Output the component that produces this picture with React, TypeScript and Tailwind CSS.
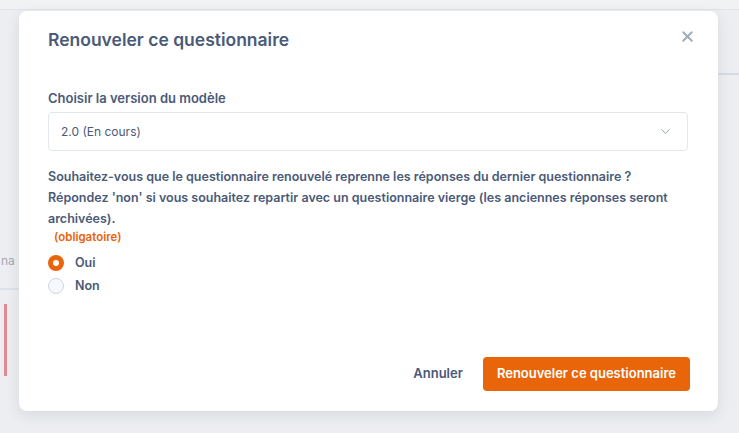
import React from "react"
import { X, ChevronDown } from "lucide-react"

function RenewModal() {
	return (
		<div className="absolute left-[19px] top-[11px] w-[699px] h-[400px] bg-white rounded-[8px] shadow-[0_4px_14px_rgba(60,70,90,0.12)] flex flex-col">
			<div className="flex items-start justify-between pl-[29px] pr-[22px] pt-[17px]">
				<h2 className="text-[17.5px] font-semibold text-[#4a5a78] leading-[24px]">
					Renouveler ce questionnaire
				</h2>
				<button className="text-[#a3abba]">
					<X size={17} strokeWidth={2.8} />
				</button>
			</div>

			<div className="px-[29px] pt-[37px] flex flex-col">
				<label className="text-[13px] font-semibold text-[#4a5a78] leading-[18px]">
					Choisir la version du modèle
				</label>
				<div className="mt-[5px] h-[39px] w-[640px] border border-[#e2e7ef] rounded-[4px] flex items-center justify-between pl-[12px] pr-[14px]">
					<span className="text-[12px] text-[#4a5a78]">2.0 (En cours)</span>
					<ChevronDown size={15} strokeWidth={1.5} className="text-[#8a9ab5]" />
				</div>

				<p className="mt-[15px] text-[12.5px] font-semibold text-[#4a5a78] leading-[21px] w-[640px]">
					Souhaitez-vous que le questionnaire renouvelé reprenne les réponses du dernier questionnaire ?
					<br />
					Répondez 'non' si vous souhaitez repartir avec un questionnaire vierge (les anciennes réponses seront archivées).
				</p>
				<span className="ml-[6px] text-[11.5px] font-semibold text-[#e8650a] leading-[16px]">
					(obligatoire)
				</span>

				<div className="mt-[10px] flex flex-col gap-[7px]">
					<label className="h-[16px] flex items-center gap-[11px]">
						<span className="w-[16px] h-[16px] rounded-full bg-[#e8650a] flex items-center justify-center">
							<span className="w-[6px] h-[6px] rounded-full bg-white" />
						</span>
						<span className="text-[12.5px] font-semibold text-[#4a5a78]">Oui</span>
					</label>
					<label className="h-[16px] flex items-center gap-[11px]">
						<span className="w-[16px] h-[16px] rounded-full border-[1.5px] border-[#cdd5e2] bg-[#f6f8fc]" />
						<span className="text-[12.5px] font-semibold text-[#4a5a78]">Non</span>
					</label>
				</div>
			</div>

			<div className="mt-auto mb-[20px] flex items-center justify-end gap-[20px] pr-[28px]">
				<button className="text-[13px] font-semibold text-[#4a5a78]">Annuler</button>
				<button className="h-[34px] px-[14px] rounded-[4px] bg-[#e8650a] text-white text-[13px] font-semibold">
					Renouveler ce questionnaire
				</button>
			</div>
		</div>
	)
}

export default function App() {
	return (
		<div
			className="relative w-[739px] h-[433px] overflow-hidden bg-[#eceef1]"
			style={{ fontFamily: "Inter, 'Noto Sans', sans-serif" }}
		>
			<div className="h-[10px] bg-[#f1f2f4] border-b border-[#e2e4e8]" />
			<div className="flex justify-end mt-[63px]">
				<div className="w-[30px] h-[2px] bg-[#d5dbe5]" />
			</div>
			<div className="mt-[178px] flex flex-col w-[60px]">
				<span className="text-[12px] text-[#a3a9b4] leading-[16px] pl-[1px]">na</span>
				<div className="mt-[19px] h-[2px] bg-[#dde2ea]" />
				<div className="mt-[14px] ml-[4px] w-[3px] h-[72px] bg-[#e08a96]" />
			</div>
			<RenewModal />
		</div>
	)
}
